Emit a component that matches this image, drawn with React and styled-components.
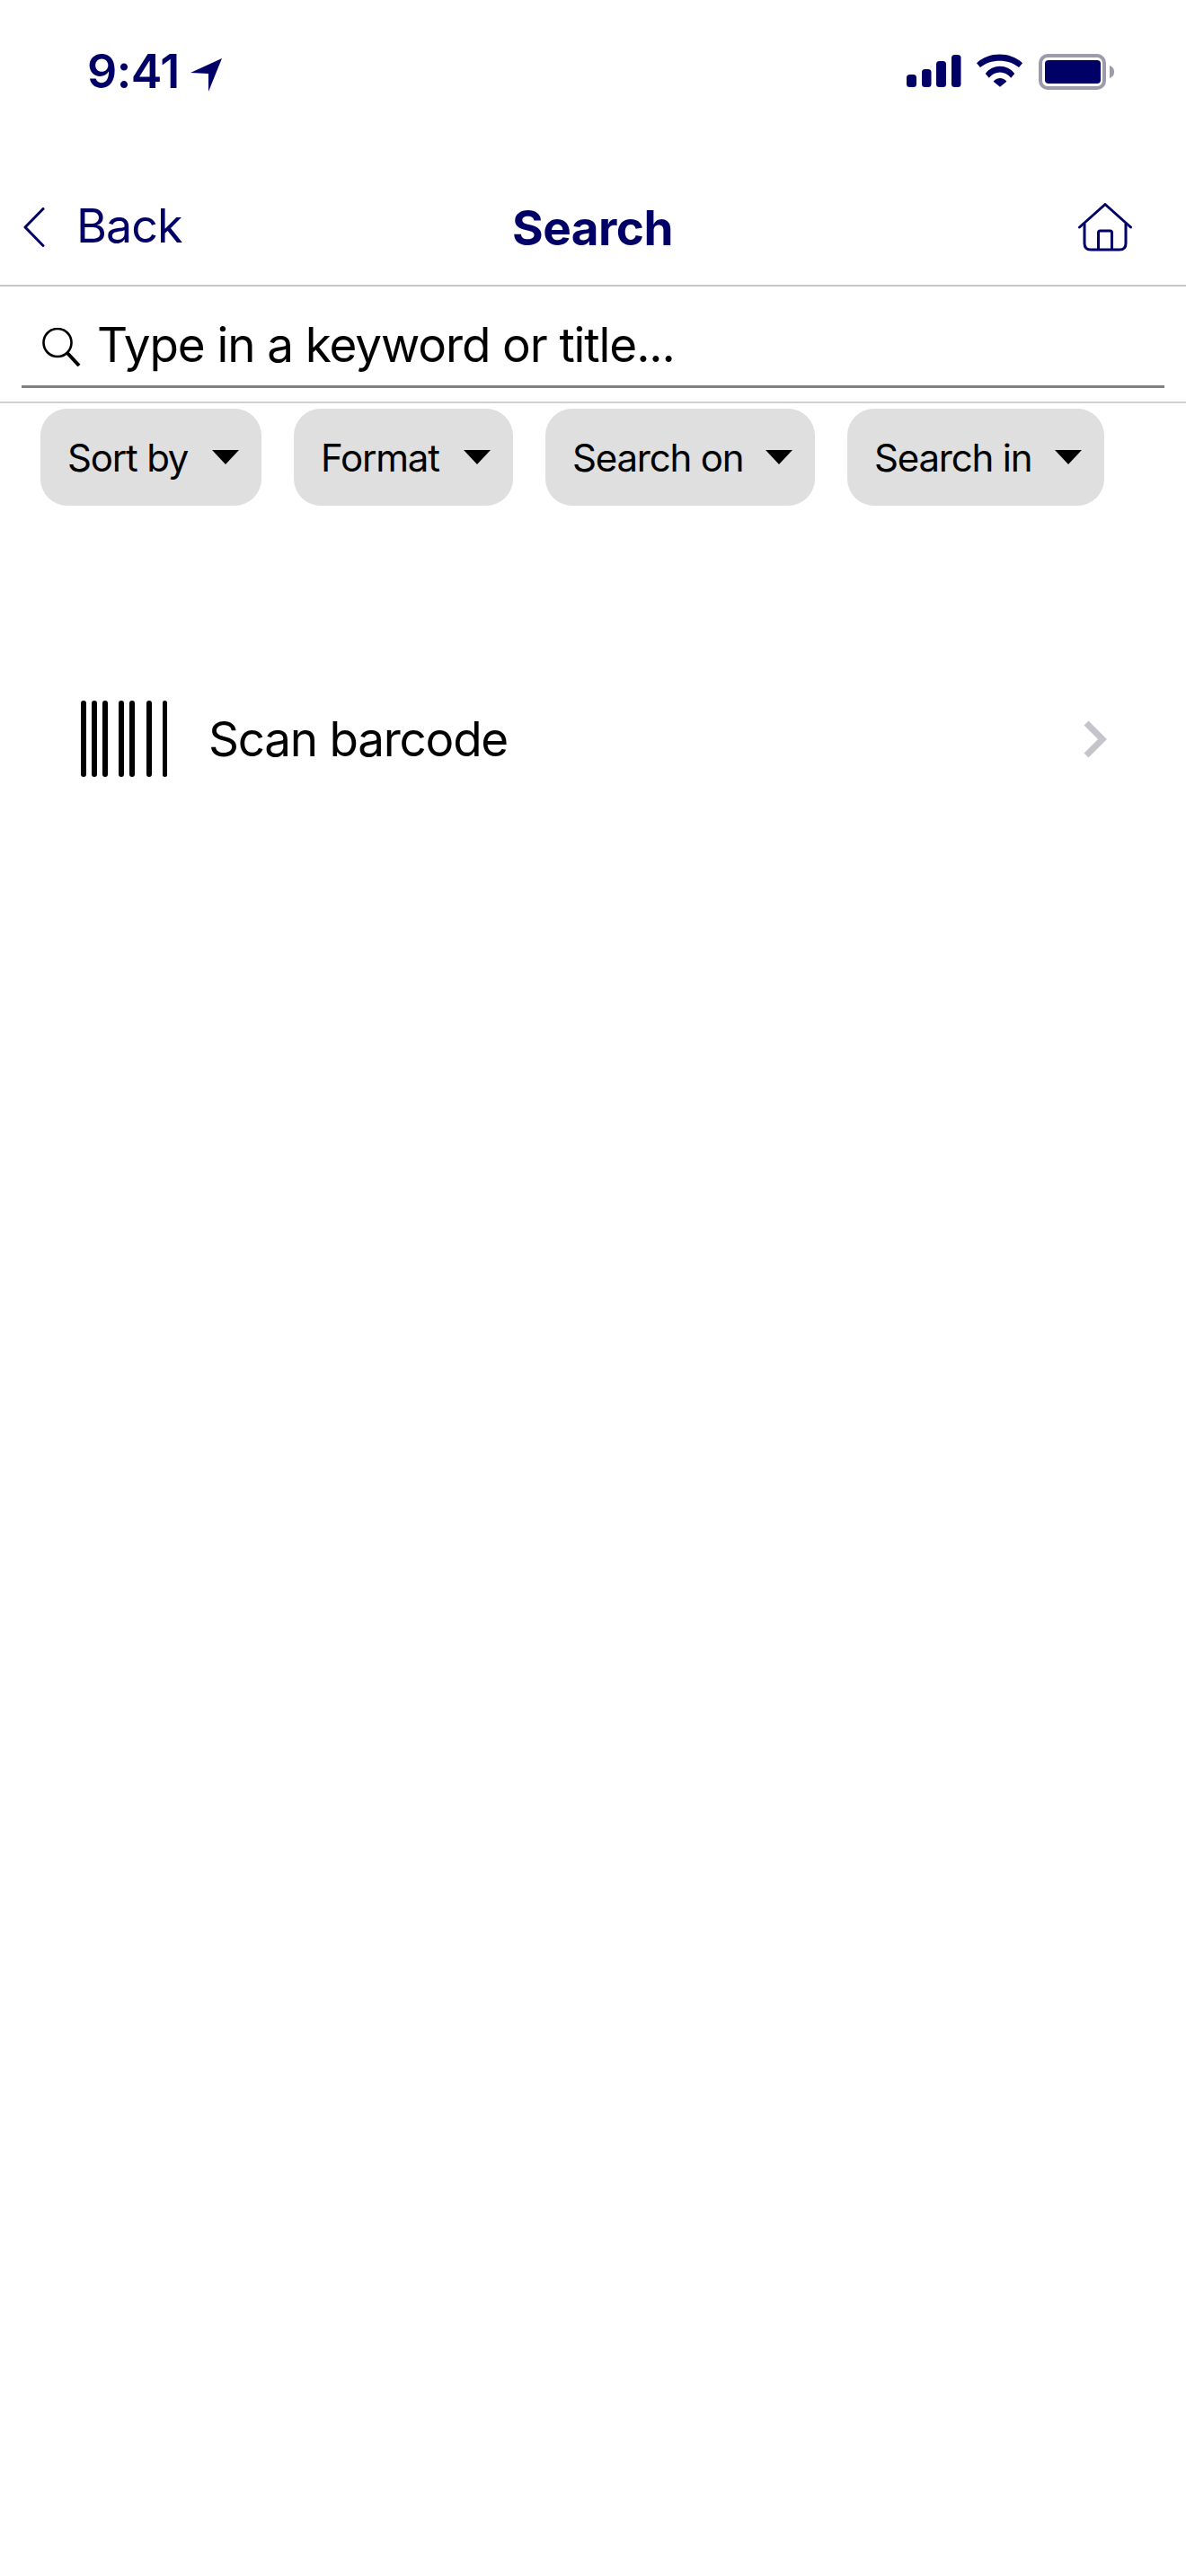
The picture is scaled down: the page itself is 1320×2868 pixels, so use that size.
import React from "react";
import styled, { createGlobalStyle } from "styled-components";

const NAVY = "#000066";

const GlobalStyle = createGlobalStyle`
  html, body {
    margin: 0;
    padding: 0;
    background: #fff;
  }
  body {
    font-family: Inter, "Liberation Sans", Arial, sans-serif;
  }
`;

const Page = styled.div`
  width: 1320px;
  height: 2868px;
  background: #fff;
  overflow: hidden;
`;

const StatusBar = styled.div`
  height: 226px;
  box-sizing: border-box;
  padding: 55px 80px 0 97px;
  display: flex;
  align-items: flex-start;
  justify-content: space-between;
  color: ${NAVY};
`;

const Clock = styled.div`
  display: flex;
  align-items: flex-start;
  gap: 12px;
  font-size: 52px;
  line-height: 50px;
  font-weight: 600;
  letter-spacing: -0.5px;
`;

const ArrowIcon = styled.svg`
  width: 36px;
  height: 38px;
  margin-top: 10px;
`;

const StatusIcons = styled.div`
  display: flex;
  align-items: flex-start;
  gap: 17px;
  margin-top: 5px;
`;

const NavBar = styled.div`
  height: 91px;
  border-bottom: 2px solid #c8c8c8;
  display: grid;
  grid-template-columns: 544px auto 1fr;
  align-items: start;
  padding: 0 60px 0 26px;
  color: ${NAVY};
`;

const BackLink = styled.div`
  display: flex;
  align-items: flex-start;
  gap: 35px;
  font-size: 52px;
  line-height: 52px;
  letter-spacing: -1px;
`;

const Title = styled.div`
  font-size: 53px;
  font-weight: 700;
  line-height: 56px;
  letter-spacing: -0.5px;
`;

const HomeButton = styled.div`
  justify-self: end;
`;

const SearchRow = styled.div`
  height: 130px;
  box-sizing: border-box;
  border-bottom: 2px solid #d0d0d0;
  padding: 0 24px 17px;
`;

const SearchField = styled.div`
  height: 113px;
  box-sizing: border-box;
  border-bottom: 3px solid #808080;
  display: flex;
  align-items: flex-start;
  padding: 30px 0 0 23px;
  gap: 18px;
  font-size: 53px;
  line-height: 70px;
  letter-spacing: -1.1px;
  color: #000;
`;

const Filters = styled.div`
  display: flex;
  gap: 36px;
  padding: 6px 0 0 45px;
`;

const Chip = styled.div`
  height: 108px;
  box-sizing: border-box;
  padding: 0 25px 0 30px;
  border-radius: 30px;
  background: #dfdfdf;
  display: flex;
  align-items: center;
  justify-content: space-between;
  width: ${(p) => p.$width}px;
  font-size: 42px;
  letter-spacing: -1.2px;
  color: #000;
`;

const Caret = styled.span`
  width: 0;
  height: 0;
  border-left: 15px solid transparent;
  border-right: 15px solid transparent;
  border-top: 16px solid #000;
`;

const ScanRow = styled.div`
  margin-top: 217px;
  padding: 0 88px 0 90px;
  height: 85px;
  display: flex;
  align-items: center;
  font-size: 53px;
  letter-spacing: -1.25px;
  color: #000;
`;

const ScanLabel = styled.span`
  margin-left: 44px;
  flex: 1;
`;

const chips = [
  { label: "Sort by", width: 246 },
  { label: "Format", width: 244 },
  { label: "Search on", width: 300 },
  { label: "Search in", width: 286 },
];

const bars = [
  [0, 6],
  [12, 6],
  [24, 6],
  [42, 6],
  [54, 6],
  [73, 6],
  [91, 5],
];

export default function App() {
  return (
    <Page>
      <GlobalStyle />
      <StatusBar>
        <Clock>
          9:41
          <ArrowIcon viewBox="0 0 36 38">
            <path d="M0 16 L35 0 L20 37 L20 17 Z" fill={NAVY} />
          </ArrowIcon>
        </Clock>
        <StatusIcons>
          <svg width="61" height="37" viewBox="0 0 61 37" style={{ marginTop: 1 }}>
            <rect x="0" y="22" width="11" height="14" rx="3.5" fill={NAVY} />
            <rect x="17" y="16" width="10.5" height="20" rx="3.5" fill={NAVY} />
            <rect x="33" y="7" width="11" height="29" rx="3.5" fill={NAVY} />
            <rect x="50" y="0" width="10.5" height="36" rx="3.5" fill={NAVY} />
          </svg>
          <svg width="52" height="37" viewBox="0 0 53 37">
            <path d="M0 10 C14 -3 38 -3 52 10 L48 15 C36 5 16 5 4 15 Z" fill={NAVY} />
            <path d="M10 22 C18 11 35 11 43 22 L39 27 C32 18.5 21 18.5 14 27 Z" fill={NAVY} />
            <path d="M19 31 C23 26 30 26 34 31 L26.5 37 Z" fill={NAVY} />
          </svg>
          <svg width="84" height="40" viewBox="0 0 84 40">
            <rect x="2" y="2" width="71" height="36" rx="8" fill="none" stroke="#9c9bab" strokeWidth="4" />
            <rect x="7" y="7" width="62" height="26" rx="4" fill={NAVY} />
            <path d="M79 13 C83 15 84 17 84 20 C84 23 83 25 79 27 Z" fill="#9c9bab" />
          </svg>
        </StatusIcons>
      </StatusBar>

      <NavBar>
        <BackLink>
          <svg width="24" height="44" viewBox="0 0 24 44" style={{ marginTop: 5 }}>
            <path d="M22 1.5 L2 22 L22 42.5" fill="none" stroke={NAVY} strokeWidth="3" strokeLinecap="round" strokeLinejoin="round" />
          </svg>
          Back
        </BackLink>
        <Title>Search</Title>
        <HomeButton>
          <svg width="60" height="54" viewBox="0 0 60 54">
            <path d="M1.5 27 L30 1.5 L58.5 27" fill="none" stroke={NAVY} strokeWidth="3" strokeLinecap="round" strokeLinejoin="round" />
            <path d="M7 23 V45 Q7 52 14 52 H46 Q53 52 53 45 V23" fill="none" stroke={NAVY} strokeWidth="3" />
            <path d="M22.5 52 V33 Q22.5 31 24.5 31 H35.5 Q37.5 31 37.5 33 V52" fill="none" stroke={NAVY} strokeWidth="3" />
          </svg>
        </HomeButton>
      </NavBar>

      <SearchRow>
        <SearchField>
          <svg width="43" height="43" viewBox="0 0 43 43" style={{ marginTop: 16 }}>
            <circle cx="17" cy="16.5" r="15.5" fill="none" stroke="#000" strokeWidth="2.6" />
            <path d="M27 27 L41 42" stroke="#000" strokeWidth="4" />
          </svg>
          Type in a keyword or title...
        </SearchField>
      </SearchRow>

      <Filters>
        {chips.map((c) => (
          <Chip key={c.label} $width={c.width}>
            {c.label}
            <Caret />
          </Chip>
        ))}
      </Filters>

      <ScanRow>
        <svg width="98" height="85" viewBox="0 0 98 85">
          {bars.map(([x, w]) => (
            <rect key={x} x={x} y="0" width={w} height="85" rx={w / 2} fill="#000" />
          ))}
        </svg>
        <ScanLabel>Scan barcode</ScanLabel>
        <svg width="26" height="44" viewBox="0 0 26 44">
          <path d="M3 4 L21 22 L3 40" fill="none" stroke="#c4c4ca" strokeWidth="7" />
        </svg>
      </ScanRow>
    </Page>
  );
}
